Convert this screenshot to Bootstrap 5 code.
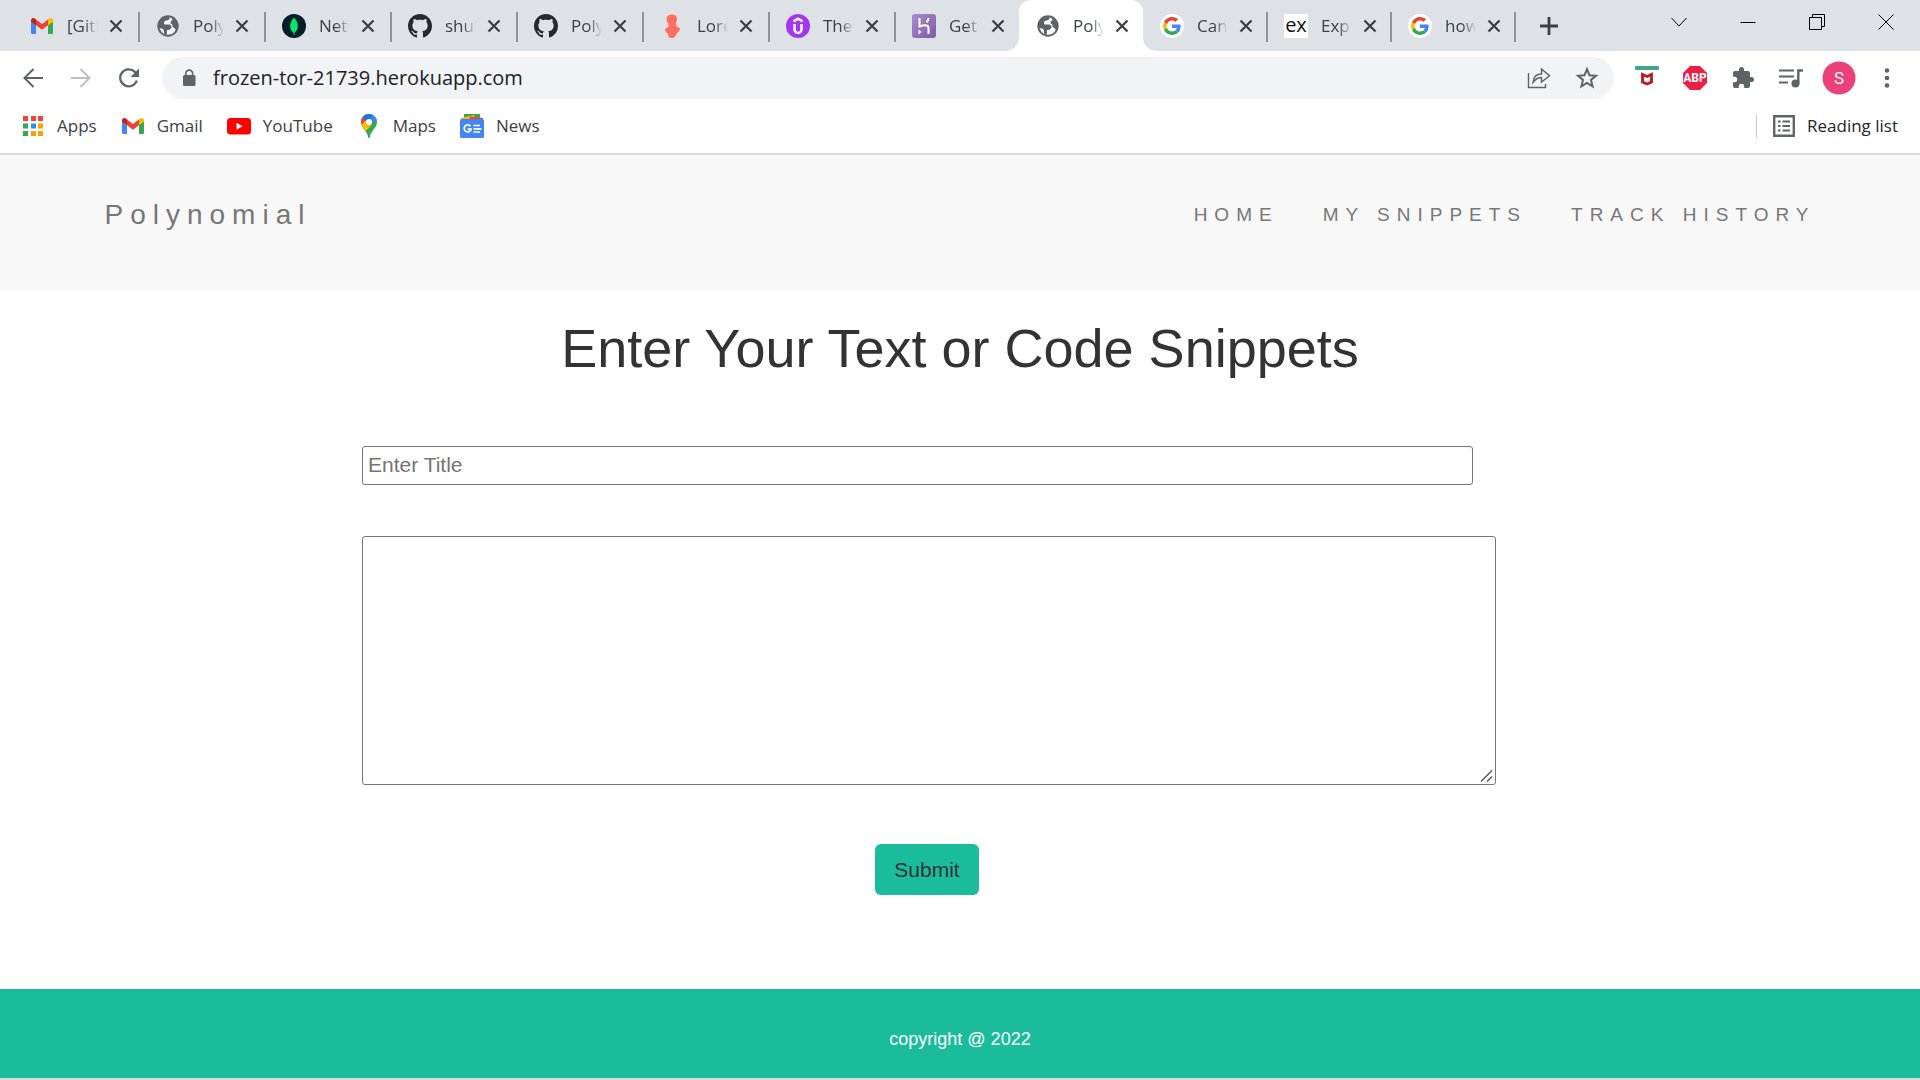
<!DOCTYPE html>
<html lang="en">
<head>
<meta charset="utf-8">
<meta name="viewport" content="width=device-width, initial-scale=1">
<title>Polynomial</title>
<link href="https://cdn.jsdelivr.net/npm/bootstrap@5.3.0/dist/css/bootstrap.min.css" rel="stylesheet">
<style>
  body { font-family: "Liberation Sans", Arial, sans-serif; color: #333; background: #fff; }
  .plain { border: 0; background: none; padding: 0; color: inherit; }
  svg { display: block; flex: none; }
  .chrome { font-family: "Open Sans", sans-serif; color: #3c4043; font-size: 17px; line-height: 24px; border-bottom: 2px solid #dadada; }

  /* tab strip */
  .strip { height: 51px; background: #dee1e6; padding-left: 13px; color: #3c4043; }
  .tabs { flex: 0 1 1502px; min-width: 0; }
  .tab { position: relative; flex: 0 1 126px; min-width: 0; padding-left: 17px; }
  .tab.quiet, .tab.quiet ~ .tab { flex-basis: 124px; }
  .tab::after { content: ""; position: absolute; right: -1px; top: 12px; height: 30px; width: 2px; background: #909396; }
  .tab.quiet::after { display: none; }
  .tab-name { width: 31px; margin: 0 10px 0 13px; overflow: hidden; white-space: nowrap; color: inherit; text-decoration: none;
    -webkit-mask-image: linear-gradient(90deg, #000 55%, transparent); mask-image: linear-gradient(90deg, #000 55%, transparent); }
  .tab.current { background: #fff; border-radius: 12px 12px 0 0; }
  .tab.current::before, .tab.current::after { content: ""; display: block; position: absolute; top: auto; bottom: 0; width: 12px; height: 12px; }
  .tab.current::before { left: -12px; background: radial-gradient(circle at 0 0, transparent 11px, #fff 12px); }
  .tab.current::after { right: -12px; background: radial-gradient(circle at 100% 0, transparent 11px, #fff 12px); }
  .new-tab { width: 68px; }
  .win { height: 43px; color: #000; }
  .win button { width: 69px; }

  /* toolbar */
  .tools { padding: 6px 9px 0; height: 50px; }
  .tool { width: 48px; height: 42px; color: #5f6368; }
  .omni { height: 42px; border-radius: 21px; background: #f1f3f4; margin: 0 9px; color: #5f6368; padding-left: 20px; }
  .omni input { border: 0; background: none; outline: 0; color: #202124; font-size: 20px; padding: 0; margin-left: 17px; min-width: 0; }
  .omni .tool:last-child { margin-right: 3px; }

  /* bookmarks */
  .marks { height: 52px; padding: 0 22px 3px 21px; }
  .marks a { color: inherit; text-decoration: none; gap: 12px; }
  .mark-list { gap: 24px; }
  .rule { width: 1px; height: 24px; background: #c8cacd; }

  /* site */
  .site-head { background: #f8f8f8; height: 135px; }
  .site-wrap { max-width: 1755px; padding: 45px 0 0; line-height: 30px; }
  .site-wrap a { color: #777; text-decoration: none; letter-spacing: 7px; padding: 0 22px; }
  .site-wrap .brand { font-size: 28px; }
  .site-wrap .menu a { font-size: 19px; }
  .title-line { font-size: 54px; line-height: 60px; margin: 28px 0 68px; }
  .snippet { width: 1196px; max-width: 100%; padding-right: 62px; }
  .snippet input, .snippet textarea { display: block; font-size: 21px; border: 1px solid #767676; border-radius: 3px; background: #fff; max-width: 100%; color: #333; }
  .snippet input { width: 1111px; height: 39px; padding: 1px 5px 2px; }
  .snippet input::placeholder { color: #757575; }
  .snippet textarea { width: 100%; height: 249px; padding: 3px; margin: 51px 0 59px; }
  .snippet textarea::-webkit-resizer { background: url("data:image/svg+xml,%3Csvg xmlns='http://www.w3.org/2000/svg' width='15' height='15'%3E%3Cpath d='M1 12.500L12 1.500M7 12.500l5-5' stroke='%23555' stroke-width='1.500'/%3E%3C/svg%3E") no-repeat; }
  .send { background: #1abc9c; color: #333; border: 0; border-radius: 6px; font-size: 21px; line-height: 30px; padding: 11px 19px 10px; }
  .site-foot { background: #1abc9c; color: #fff; font-size: 18px; line-height: 26px; padding: 37px 0 26px; border-bottom: 2px solid #dadada; }
</style>
<script src="https://cdn.jsdelivr.net/npm/bootstrap@5.3.0/dist/js/bootstrap.bundle.min.js"></script>
</head>
<body class="d-flex flex-column min-vh-100">

<svg width="0" height="0" class="position-absolute" aria-hidden="true">
  <symbol id="gmail" viewBox="0 0 24 24">
    <path fill="#4285f4" d="M1 6v12.500a1.500 1.500 0 0 0 1.500 1.500H6v-9.500z"/>
    <path fill="#34a853" d="M18 20h3.500a1.500 1.500 0 0 0 1.500-1.500V6l-5 4.500z"/>
    <path fill="#ea4335" d="M6 5.500l6 4.500 6-4.500v5.800l-6 4.500-6-4.500z"/>
    <path fill="#c5221f" d="M1 6.300C1 4 3.300 3.200 5 4.500l1 .8v6L1 7.700z"/>
    <path fill="#fbbc04" d="M23 6.300C23 4 20.700 3.200 19 4.500l-1 .8v6l5-3.600z"/>
  </symbol>
  <symbol id="globe" viewBox="0 0 24 24">
    <circle cx="12" cy="12" r="9.700" fill="#fff" fill-opacity=".7" stroke="#5f6368" stroke-width="2"/>
    <path fill="#5f6368" d="M2 12C2 6 6 2 12 2l1.500 2c0 1.500-1 2.500-3 2.500-1.500 0-2.500 1-2.500 2.500 0 1 .5 1.500 1.500 1.500H13c1.500 0 2.500 1 2.500 2.500S14 16 12 16h-1v2.500c0 2-1 2.500-2 2.500l-1-2c0-2 0-4-2-4.500L2.500 14z"/>
    <path fill="#5f6368" d="M15 3.500c4 .5 7 4 7 8.500 0 1.500-.5 3-1 4-2 0-2-2-3.500-2.500-1 0-1-1-1-2 0-1.500-2-1.500-2-3 0-2 2-1.500 2-3z"/>
  </symbol>
  <symbol id="octo" viewBox="0 0 16 16">
    <path fill="#24292f" d="M8 0C3.580 0 0 3.580 0 8c0 3.540 2.290 6.530 5.470 7.590.4.070.55-.17.55-.38 0-.19-.01-.82-.01-1.490-2.010.37-2.530-.49-2.690-.94-.09-.23-.48-.94-.82-1.130-.28-.15-.68-.52-.01-.53.63-.01 1.080.58 1.230.82.72 1.210 1.870.87 2.330.66.07-.52.28-.87.51-1.070-1.780-.2-3.640-.89-3.640-3.950 0-.87.31-1.590.82-2.150-.08-.2-.36-1.020.08-2.120 0 0 .67-.21 2.200.82.64-.18 1.320-.27 2-.27s1.360.09 2 .27c1.530-1.040 2.200-.82 2.200-.82.44 1.100.16 1.920.08 2.120.51.56.82 1.270.82 2.150 0 3.070-1.870 3.750-3.650 3.950.29.25.54.73.54 1.480 0 1.070-.01 1.930-.01 2.200 0 .21.15.46.55.38A8.010 8.010 0 0 0 16 8c0-4.420-3.580-8-8-8z"/>
  </symbol>
  <symbol id="goog" viewBox="0 0 24 24">
    <circle cx="12" cy="12" r="12" fill="#fff"/>
    <g transform="translate(3 3) scale(.375)">
      <path fill="#ea4335" d="M24 9.500c3.540 0 6.710 1.220 9.210 3.600l6.850-6.850C35.900 2.380 30.470 0 24 0 14.620 0 6.510 5.380 2.560 13.220l7.980 6.190C12.430 13.720 17.740 9.500 24 9.500z"/>
      <path fill="#4285f4" d="M46.980 24.550c0-1.570-.15-3.090-.38-4.550H24v9.020h12.940c-.58 2.960-2.260 5.480-4.780 7.180l7.730 6c4.510-4.180 7.090-10.360 7.090-17.650z"/>
      <path fill="#fbbc05" d="M10.530 28.590c-.48-1.450-.76-2.990-.76-4.590s.27-3.140.76-4.590l-7.980-6.190C.92 16.460 0 20.120 0 24c0 3.880.92 7.540 2.560 10.780l7.970-6.190z"/>
      <path fill="#34a853" d="M24 48c6.480 0 11.930-2.130 15.890-5.810l-7.730-6c-2.150 1.450-4.920 2.300-8.160 2.300-6.260 0-11.570-4.220-13.470-9.910l-7.980 6.190C6.510 42.620 14.620 48 24 48z"/>
    </g>
  </symbol>
  <symbol id="cross" viewBox="0 0 16 16"><path d="M2.500 2.500l11 11M13.500 2.500l-11 11" stroke="currentColor" stroke-width="2.300" fill="none"/></symbol>
</svg>

<header class="chrome">
  <div class="strip d-flex">
    <nav class="tabs d-flex" aria-label="Open tabs">
      <div class="tab d-flex align-items-center"><svg width="24" height="24"><use href="#gmail"/></svg><a href="#" class="tab-name">[GitH</a><button class="plain" aria-label="Close tab"><svg width="16" height="16"><use href="#cross"/></svg></button></div>
      <div class="tab d-flex align-items-center"><svg width="24" height="24"><use href="#globe"/></svg><a href="#" class="tab-name">Poly</a><button class="plain" aria-label="Close tab"><svg width="16" height="16"><use href="#cross"/></svg></button></div>
      <div class="tab d-flex align-items-center"><svg width="24" height="24" viewBox="0 0 24 24"><circle cx="12" cy="12" r="12" fill="#001e2b"/><path fill="#00ed64" d="M12 3.500c-5 5.500-5 11.500-.4 15.500v2h.8v-2C17 15 17 9 12 3.500z"/><path fill="#00a846" d="M12 5V21h.4v-2z"/></svg><a href="#" class="tab-name">Netw</a><button class="plain" aria-label="Close tab"><svg width="16" height="16"><use href="#cross"/></svg></button></div>
      <div class="tab d-flex align-items-center"><svg width="24" height="24"><use href="#octo"/></svg><a href="#" class="tab-name">shul</a><button class="plain" aria-label="Close tab"><svg width="16" height="16"><use href="#cross"/></svg></button></div>
      <div class="tab d-flex align-items-center"><svg width="24" height="24"><use href="#octo"/></svg><a href="#" class="tab-name">Poly</a><button class="plain" aria-label="Close tab"><svg width="16" height="16"><use href="#cross"/></svg></button></div>
      <div class="tab d-flex align-items-center"><svg width="24" height="24" viewBox="0 0 24 24"><path fill="#ff6f61" d="M7 3c1-3 9-4 10 1 0 3-1 4-1 6 0 1 .5 2 1 3l3 1c0 3-2 4-3 5-1 2-2 5-5 5s-4-2-4-4c-2-2-3-3-3-5l3-2c1-1 1-2 0-4-1-1-2-3-1-6z"/></svg><a href="#" class="tab-name">Lore</a><button class="plain" aria-label="Close tab"><svg width="16" height="16"><use href="#cross"/></svg></button></div>
      <div class="tab d-flex align-items-center"><svg width="24" height="24" viewBox="0 0 24 24"><circle cx="12" cy="12" r="12" fill="#a435f0"/><path d="M7.500 7.300L12 4.700l4.500 2.600M8.500 10v5.500a3.500 3.500 0 0 0 7 0V10" fill="none" stroke="#fff" stroke-width="2.500"/></svg><a href="#" class="tab-name">The</a><button class="plain" aria-label="Close tab"><svg width="16" height="16"><use href="#cross"/></svg></button></div>
      <div class="tab quiet d-flex align-items-center"><svg width="24" height="24" viewBox="0 0 24 24"><defs><linearGradient id="hk" x1="0" y1="0" x2="1" y2="1"><stop offset="0" stop-color="#a98bcb"/><stop offset="1" stop-color="#7d5ba6"/></linearGradient></defs><rect width="24" height="24" rx="3" fill="url(#hk)"/><path d="M7.500 4v8.500c3-1.300 9-2.500 9 1.500v6M16.500 4c0 1.500-.7 3-2 4.300" fill="none" stroke="#fff" stroke-width="2"/><path fill="#fff" d="M6.500 15.500l3 2.500-3 2.500z"/></svg><a href="#" class="tab-name">Get</a><button class="plain" aria-label="Close tab"><svg width="16" height="16"><use href="#cross"/></svg></button></div>
      <div class="tab current d-flex align-items-center"><svg width="24" height="24"><use href="#globe"/></svg><a href="#" class="tab-name" aria-current="page">Poly</a><button class="plain" aria-label="Close tab"><svg width="16" height="16"><use href="#cross"/></svg></button></div>
      <div class="tab d-flex align-items-center"><svg width="24" height="24"><use href="#goog"/></svg><a href="#" class="tab-name">Can</a><button class="plain" aria-label="Close tab"><svg width="16" height="16"><use href="#cross"/></svg></button></div>
      <div class="tab d-flex align-items-center"><svg width="24" height="24" viewBox="0 0 24 24"><rect width="24" height="24" fill="#fff"/><text x="12" y="18" text-anchor="middle" font-family="Open Sans, sans-serif" font-size="20" fill="#111">ex</text></svg><a href="#" class="tab-name">Exp</a><button class="plain" aria-label="Close tab"><svg width="16" height="16"><use href="#cross"/></svg></button></div>
      <div class="tab d-flex align-items-center"><svg width="24" height="24"><use href="#goog"/></svg><a href="#" class="tab-name">how</a><button class="plain" aria-label="Close tab"><svg width="16" height="16"><use href="#cross"/></svg></button></div>
    </nav>
    <button class="plain new-tab d-flex align-items-center justify-content-center" aria-label="New tab"><svg width="20" height="20" viewBox="0 0 20 20"><path d="M10 1v18M1 10h18" stroke="currentColor" stroke-width="2.800"/></svg></button>
    <div class="win d-flex ms-auto">
      <button class="plain d-flex align-items-center justify-content-center" aria-label="Search tabs"><svg width="16" height="16" viewBox="0 0 16 16"><path d="M.5 4l7.500 8 7.500-8" fill="none" stroke="currentColor"/></svg></button>
      <button class="plain d-flex align-items-center justify-content-center" aria-label="Minimize"><svg width="16" height="16" viewBox="0 0 16 16"><path d="M.5 8.500h15" stroke="currentColor"/></svg></button>
      <button class="plain d-flex align-items-center justify-content-center" aria-label="Restore"><svg width="16" height="16" viewBox="0 0 16 16"><path d="M.5 3.500h12v12H.5zM3.500 3.500v-3h12v12h-3" fill="none" stroke="currentColor"/></svg></button>
      <button class="plain d-flex align-items-center justify-content-center" aria-label="Close"><svg width="16" height="16" viewBox="0 0 16 16"><path d="M.5.5l15 15M15.500.5l-15 15" stroke="currentColor"/></svg></button>
    </div>
  </div>

  <div class="tools d-flex">
    <button class="plain tool d-flex align-items-center justify-content-center" aria-label="Back"><svg width="20" height="20" viewBox="0 0 20 20"><path d="M20 10H2M10.500 1L1.500 10l9 9" fill="none" stroke="currentColor" stroke-width="2"/></svg></button>
    <button class="plain tool d-flex align-items-center justify-content-center" aria-label="Forward"><svg width="20" height="20" viewBox="0 0 20 20"><path d="M0 10h18M9.500 1l9 9-9 9" fill="none" stroke="#bdbfc1" stroke-width="2"/></svg></button>
    <button class="plain tool d-flex align-items-center justify-content-center" aria-label="Reload"><svg width="20" height="20" viewBox="0 0 20 20"><path d="M17.800 12.500a8.500 8.500 0 1 1-2-8.600l2 2.100" fill="none" stroke="currentColor" stroke-width="2.300"/><path fill="currentColor" d="M20 .5V9h-8.500z"/></svg></button>
    <div class="omni d-flex align-items-center flex-grow-1">
      <svg width="14" height="18" viewBox="0 0 14 18"><rect x="1" y="6" width="12.500" height="11" rx="1.500" fill="currentColor"/><path d="M3.800 7V4.500a3.400 3.400 0 0 1 6.800 0V7" fill="none" stroke="currentColor" stroke-width="1.600"/></svg>
      <input type="text" class="flex-grow-1" aria-label="Address" value="frozen-tor-21739.herokuapp.com">
      <button class="plain tool d-flex align-items-center justify-content-center" aria-label="Share"><svg width="24" height="24" viewBox="0 0 24 24"><path d="M1.500 7v14.500h17V18M6 16.500c.5-5.500 3-8.500 8.500-8.500V3l8 6.700-8 6.300v-4.500c-3.500 0-6 1.500-8.500 5z" fill="none" stroke="currentColor" stroke-width="1.400"/></svg></button>
      <button class="plain tool d-flex align-items-center justify-content-center" aria-label="Bookmark this page"><svg width="24" height="24" viewBox="0 0 24 24"><path d="M12 3.200l2.500 6 6.500.5-5 4.200 1.600 6.400L12 16.900l-5.600 3.400L8 13.900 3 9.700l6.500-.5z" fill="none" stroke="currentColor" stroke-width="2"/></svg></button>
    </div>
    <button class="plain tool d-flex align-items-center justify-content-center" aria-label="McAfee"><svg width="24" height="24" viewBox="0 0 24 24"><rect width="24" height="4" rx="1" fill="#40a78b"/><path d="M7.500 8.500L12 10.500l4.500-2V16L12 18l-4.500-2z" fill="none" stroke="#c01818" stroke-width="2.800"/></svg></button>
    <button class="plain tool d-flex align-items-center justify-content-center" aria-label="Adblock Plus"><svg width="24" height="24" viewBox="0 0 24 24"><path fill="#ed1e45" d="M7 0h10l7 7v10l-7 7H7l-7-7V7z"/><text x="12" y="16" text-anchor="middle" font-family="Roboto, sans-serif" font-size="12" font-weight="700" fill="#fff">ABP</text></svg></button>
    <button class="plain tool d-flex align-items-center justify-content-center" aria-label="Extensions"><svg width="24" height="24" viewBox="0 0 24 24"><path fill="currentColor" d="M20.500 11H19V7c0-1.100-.9-2-2-2h-4V3.500a2.500 2.500 0 0 0-5 0V5H4c-1.100 0-2 .9-2 2v3.800h1.500a2.700 2.700 0 0 1 0 5.400H2V20c0 1.100.9 2 2 2h3.800v-1.500a2.700 2.700 0 0 1 5.400 0V22H17c1.100 0 2-.9 2-2v-4h1.500a2.500 2.500 0 0 0 0-5z"/></svg></button>
    <button class="plain tool d-flex align-items-center justify-content-center" aria-label="Media"><svg width="24" height="24" viewBox="0 0 24 24"><path d="M0 4.500h15M0 10.500h15M0 16.500h9" stroke="currentColor" stroke-width="2.200"/><circle cx="16.500" cy="17.500" r="4" fill="currentColor"/><path d="M19.300 17.500v-13H24" fill="none" stroke="currentColor" stroke-width="2.400"/></svg></button>
    <button class="plain tool d-flex align-items-center justify-content-center" aria-label="Profile"><svg width="34" height="34" viewBox="0 0 34 34"><circle cx="17" cy="17" r="16.500" fill="#ec407a"/><text x="17" y="23" text-anchor="middle" font-family="Roboto, sans-serif" font-size="17" fill="#fff">S</text></svg></button>
    <button class="plain tool d-flex align-items-center justify-content-center" aria-label="Menu"><svg width="20" height="20" viewBox="0 0 20 20"><g fill="currentColor"><circle cx="10" cy="2.500" r="2.300"/><circle cx="10" cy="10" r="2.300"/><circle cx="10" cy="17.500" r="2.300"/></g></svg></button>
  </div>

  <nav class="marks d-flex align-items-center" aria-label="Bookmarks">
    <div class="mark-list d-flex">
      <a href="#" class="d-flex align-items-center"><svg width="24" height="24" viewBox="0 0 24 24"><g fill="#f44336"><path d="M2 2h5v5H2zM10 2h5v5h-5zM17 2h5v5h-5z"/></g><path fill="#34a853" d="M2 9.500h5v5H2zM2 17h5v5H2z"/><path fill="#2196f3" d="M10 9.500h5v5h-5z"/><path fill="#ffa000" d="M17 9.500h5v5h-5zM10 17h5v5h-5zM17 17h5v5h-5z"/></svg>Apps</a>
      <a href="#" class="d-flex align-items-center"><svg width="24" height="24"><use href="#gmail"/></svg>Gmail</a>
      <a href="#" class="d-flex align-items-center"><svg width="24" height="24" viewBox="0 0 24 24"><rect y="4" width="24" height="16.500" rx="3.500" fill="#f00"/><path fill="#fff" d="M9.500 8.700v7l6-3.500z"/></svg>YouTube</a>
      <a href="#" class="d-flex align-items-center"><svg width="24" height="24" viewBox="0 0 24 24"><defs><clipPath id="pin"><path d="M12 0a8 8 0 0 1 8 8c0 6-5.500 7.500-7 14.500-.3 2-1.700 2-2 0C9.500 15.500 4 14 4 8a8 8 0 0 1 8-8z"/></clipPath></defs><g clip-path="url(#pin)"><path fill="#34a853" d="M0 0h24v24H0z"/><path fill="#fbbc04" d="M0 20V9l12-4 3 5.500L6 20z"/><path fill="#ea4335" d="M0 0h8l2 5-7 7H0z"/><path fill="#1a73e8" d="M5 2.500L10 8l6.500-8H5z"/><path fill="#4285f4" d="M9 9l8.500-9L20 6l-6.500 5z"/></g><circle cx="12" cy="8" r="3" fill="#fff"/></svg>Maps</a>
      <a href="#" class="d-flex align-items-center"><svg width="24" height="24" viewBox="0 0 24 24"><path fill="#34a853" d="M4 0h16v7H4z"/><path fill="#fbbc04" d="M1 4l13-3 2 6H1z"/><path fill="#ea4335" d="M10 2.500l13 1.500v3H9z"/><rect y="5" width="24" height="19" rx="1.500" fill="#4285f4"/><path d="M10.500 12.300a3.500 3.500 0 1 0 .6 2.700H7.500M13.500 11.500H20M13.500 14.800h8M13.500 18H20" fill="none" stroke="#fff" stroke-width="1.700"/></svg>News</a>
    </div>
    <div class="d-flex align-items-center ms-auto">
      <span class="rule"></span>
      <a href="#" class="d-flex align-items-center ms-3 text-dark"><svg width="22" height="22" viewBox="0 0 22 22"><path d="M1.200 1.200h19.600v19.600H1.200z" fill="none" stroke="#5f6368" stroke-width="2.400"/><path d="M5 6.500h2.500M5 11h2.500M5 15.500h2.500M9.500 6.500H17M9.500 11H17M9.500 15.500H17" stroke="#5f6368" stroke-width="2.200"/></svg>Reading list</a>
    </div>
  </nav>
</header>

<div class="site-head">
  <nav class="container-fluid site-wrap d-flex justify-content-between" aria-label="Main">
    <a href="#" class="brand">Polynomial</a>
    <div class="menu d-flex">
      <a href="#">HOME</a>
      <a href="#">MY SNIPPETS</a>
      <a href="#">TRACK HISTORY</a>
    </div>
  </nav>
</div>

<main class="flex-grow-1">
  <h1 class="title-line text-center fw-normal">Enter Your Text or Code Snippets</h1>
  <form class="snippet mx-auto">
    <label for="snip-title" class="visually-hidden">Title</label>
    <input id="snip-title" type="text" placeholder="Enter Title">
    <label for="snip-body" class="visually-hidden">Snippet</label>
    <textarea id="snip-body"></textarea>
    <div class="text-center pe-1"><button type="submit" class="send">Submit</button></div>
  </form>
</main>

<footer class="site-foot text-center">copyright @ 2022</footer>
</body>
</html>
